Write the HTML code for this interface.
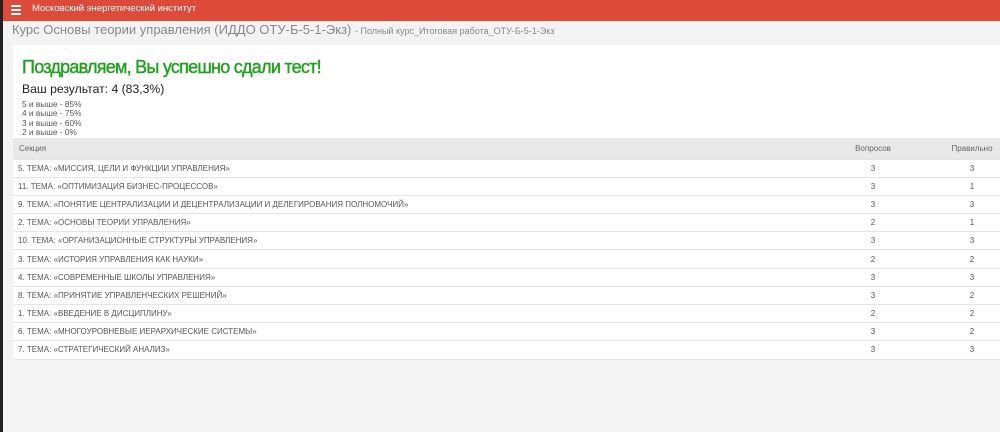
<!DOCTYPE html>
<html><head><meta charset="utf-8"><style>
*{margin:0;padding:0;box-sizing:border-box}
body{width:1000px;height:432px;overflow:hidden;background:#f3f3f3;font-family:"Liberation Sans",sans-serif;position:relative}
.lb{position:absolute;left:0;top:0;width:3px;height:432px;background:#222}
.top{position:absolute;left:0;top:0;width:1000px;height:21px;background:#de4a39}
.top .ham{position:absolute;left:11px;top:5px;width:10px}
.top .ham i{display:block;height:2px;background:#fff;margin-bottom:2px}
.top .t{position:absolute;left:32px;top:3px;color:#fff;font-size:9.5px}
.crumb{position:absolute;left:12px;top:22px;color:#888;font-size:13px;white-space:nowrap}
.crumb small{font-size:9px}
.card{position:absolute;left:13px;top:45px;width:987px;height:315px;background:#fff}
h1{position:absolute;left:9px;top:12px;color:#1ea11e;font-size:18px;font-weight:normal;white-space:nowrap;letter-spacing:-0.75px;-webkit-text-stroke:0.4px #1ea11e}
.res{position:absolute;left:9px;top:37px;font-size:12.2px;color:#222}
.sc{position:absolute;left:9px;top:55px;font-size:8.3px;color:#555;line-height:9.3px}
table{position:absolute;left:0;top:93px;width:987px;border-collapse:collapse;font-size:8px;color:#555}
th{background:#e8e8e8;font-weight:normal;height:21px;text-align:left;padding-left:6px;color:#666}
td{height:18.2px;border-top:1px solid #e4e4e4;padding-left:5px}
tr:last-child td{border-bottom:1px solid #e4e4e4}
.c1{width:142px;text-align:center;padding:0}
.c2{width:56px;text-align:center;padding:0}
</style></head><body>
<div class="top"><div class="ham"><i></i><i></i><i></i></div><div class="t">Московский энергетический институт</div></div>
<div class="lb"></div>
<div class="crumb">Курс Основы теории управления (ИДДО ОТУ-Б-5-1-Экз) <small>- Полный курс_Итоговая работа_ОТУ-Б-5-1-Экз</small></div>
<div class="card">
<h1>Поздравляем, Вы успешно сдали тест!</h1>
<div class="res">Ваш результат: 4 (83,3%)</div>
<div class="sc">5 и выше - 85%<br>4 и выше - 75%<br>3 и выше - 60%<br>2 и выше - 0%</div>
<table>
<tr><th>Секция</th><th class="c1">Вопросов</th><th class="c2">Правильно</th></tr>
<tr><td>5. ТЕМА: «МИССИЯ, ЦЕЛИ И ФУНКЦИИ УПРАВЛЕНИЯ»</td><td class="c1">3</td><td class="c2">3</td></tr>
<tr><td>11. ТЕМА: «ОПТИМИЗАЦИЯ БИЗНЕС-ПРОЦЕССОВ»</td><td class="c1">3</td><td class="c2">1</td></tr>
<tr><td>9. ТЕМА: «ПОНЯТИЕ ЦЕНТРАЛИЗАЦИИ И ДЕЦЕНТРАЛИЗАЦИИ И ДЕЛЕГИРОВАНИЯ ПОЛНОМОЧИЙ»</td><td class="c1">3</td><td class="c2">3</td></tr>
<tr><td>2. ТЕМА: «ОСНОВЫ ТЕОРИИ УПРАВЛЕНИЯ»</td><td class="c1">2</td><td class="c2">1</td></tr>
<tr><td>10. ТЕМА: «ОРГАНИЗАЦИОННЫЕ СТРУКТУРЫ УПРАВЛЕНИЯ»</td><td class="c1">3</td><td class="c2">3</td></tr>
<tr><td>3. ТЕМА: «ИСТОРИЯ УПРАВЛЕНИЯ КАК НАУКИ»</td><td class="c1">2</td><td class="c2">2</td></tr>
<tr><td>4. ТЕМА: «СОВРЕМЕННЫЕ ШКОЛЫ УПРАВЛЕНИЯ»</td><td class="c1">3</td><td class="c2">3</td></tr>
<tr><td>8. ТЕМА: «ПРИНЯТИЕ УПРАВЛЕНЧЕСКИХ РЕШЕНИЙ»</td><td class="c1">3</td><td class="c2">2</td></tr>
<tr><td>1. ТЕМА: «ВВЕДЕНИЕ В ДИСЦИПЛИНУ»</td><td class="c1">2</td><td class="c2">2</td></tr>
<tr><td>6. ТЕМА: «МНОГОУРОВНЕВЫЕ ИЕРАРХИЧЕСКИЕ СИСТЕМЫ»</td><td class="c1">3</td><td class="c2">2</td></tr>
<tr><td>7. ТЕМА: «СТРАТЕГИЧЕСКИЙ АНАЛИЗ»</td><td class="c1">3</td><td class="c2">3</td></tr>
</table>
</div>
</body></html>
